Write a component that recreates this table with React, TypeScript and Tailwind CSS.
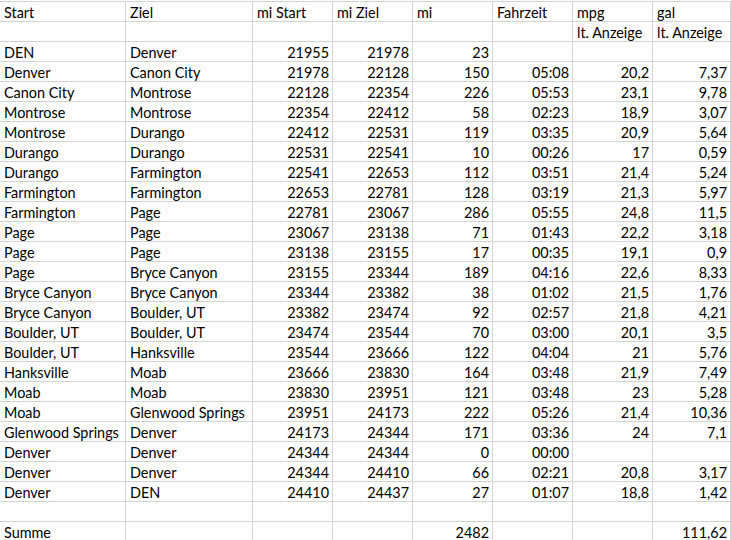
const rows: string[][] = [
  ['Start', 'Ziel', 'mi Start', 'mi Ziel', 'mi', 'Fahrzeit', 'mpg', 'gal'],
  ['', '', '', '', '', '', 'lt. Anzeige', 'lt. Anzeige'],
  ['DEN', 'Denver', '21955', '21978', '23', '', '', ''],
  ['Denver', 'Canon City', '21978', '22128', '150', '05:08', '20,2', '7,37'],
  ['Canon City', 'Montrose', '22128', '22354', '226', '05:53', '23,1', '9,78'],
  ['Montrose', 'Montrose', '22354', '22412', '58', '02:23', '18,9', '3,07'],
  ['Montrose', 'Durango', '22412', '22531', '119', '03:35', '20,9', '5,64'],
  ['Durango', 'Durango', '22531', '22541', '10', '00:26', '17', '0,59'],
  ['Durango', 'Farmington', '22541', '22653', '112', '03:51', '21,4', '5,24'],
  ['Farmington', 'Farmington', '22653', '22781', '128', '03:19', '21,3', '5,97'],
  ['Farmington', 'Page', '22781', '23067', '286', '05:55', '24,8', '11,5'],
  ['Page', 'Page', '23067', '23138', '71', '01:43', '22,2', '3,18'],
  ['Page', 'Page', '23138', '23155', '17', '00:35', '19,1', '0,9'],
  ['Page', 'Bryce Canyon', '23155', '23344', '189', '04:16', '22,6', '8,33'],
  ['Bryce Canyon', 'Bryce Canyon', '23344', '23382', '38', '01:02', '21,5', '1,76'],
  ['Bryce Canyon', 'Boulder, UT', '23382', '23474', '92', '02:57', '21,8', '4,21'],
  ['Boulder, UT', 'Boulder, UT', '23474', '23544', '70', '03:00', '20,1', '3,5'],
  ['Boulder, UT', 'Hanksville', '23544', '23666', '122', '04:04', '21', '5,76'],
  ['Hanksville', 'Moab', '23666', '23830', '164', '03:48', '21,9', '7,49'],
  ['Moab', 'Moab', '23830', '23951', '121', '03:48', '23', '5,28'],
  ['Moab', 'Glenwood Springs', '23951', '24173', '222', '05:26', '21,4', '10,36'],
  ['Glenwood Springs', 'Denver', '24173', '24344', '171', '03:36', '24', '7,1'],
  ['Denver', 'Denver', '24344', '24344', '0', '00:00', '', ''],
  ['Denver', 'Denver', '24344', '24410', '66', '02:21', '20,8', '3,17'],
  ['Denver', 'DEN', '24410', '24437', '27', '01:07', '18,8', '1,42'],
  ['', '', '', '', '', '', '', ''],
  ['Summe', '', '', '', '2482', '', '', '111,62'],
];

const widths = ['w-[126px]', 'w-[127px]', 'w-[80px]', 'w-[80px]', 'w-[80px]', 'w-[80px]', 'w-[80px]', 'w-[78px]'];

export default function App() {
  return (
    <div className="w-[731px] h-[540px] overflow-hidden bg-white text-black" style={{ fontFamily: 'Lato, "Liberation Sans", sans-serif' }}>
      <div className="mt-px border-t border-[#d4d4d4]">
        {rows.map((row, i) => (
          <div key={i} className="flex h-[20px] border-b border-[#d4d4d4]">
            {row.map((cell, j) => {
              const right = i >= 2 && j >= 2;
              return (
                <div
                  key={j}
                  className={`${widths[j]} shrink-0 border-r border-[#d4d4d4] text-[14.4px] leading-[21px] whitespace-nowrap ${right ? 'text-right pr-[3px]' : 'pl-[4px]'}`}
                >
                  {cell}
                </div>
              );
            })}
          </div>
        ))}
      </div>
    </div>
  );
}
